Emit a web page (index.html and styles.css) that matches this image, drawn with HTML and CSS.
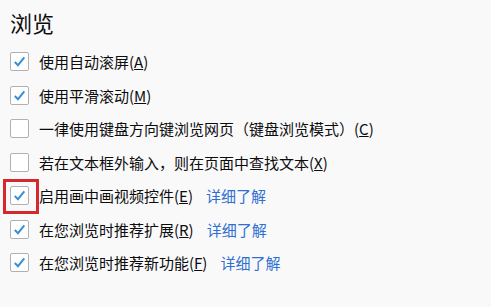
FILE: index.html
```html
<!DOCTYPE html>
<html lang="zh-CN">
<head>
<meta charset="UTF-8">
<title>浏览</title>
<link rel="stylesheet" href="styles.css">
</head>
<body>

<h1 class="title">浏览</h1>

<div class="option">
    <span class="box checked"><svg viewBox="0 0 19 19"><path d="M4.8 10 L8 13.2 L14.3 5.4"/></svg></span>
    <span class="label">使用自动滚屏(<span class="ak">A</span>)</span>
</div>
<div class="option">
    <span class="box checked"><svg viewBox="0 0 19 19"><path d="M4.8 10 L8 13.2 L14.3 5.4"/></svg></span>
    <span class="label">使用平滑滚动(<span class="ak">M</span>)</span>
</div>
<div class="option">
    <span class="box"></span>
    <span class="label">一律使用键盘方向键浏览网页（键盘浏览模式）(<span class="ak">C</span>)</span>
</div>
<div class="option">
    <span class="box"></span>
    <span class="label">若在文本框外输入，则在页面中查找文本(<span class="ak">X</span>)</span>
</div>
<div class="option">
    <span class="box checked highlight"><svg viewBox="0 0 19 19"><path d="M4.8 10 L8 13.2 L14.3 5.4"/></svg></span>
    <span class="label">启用画中画视频控件(<span class="ak">E</span>)</span>
    <a class="more" href="#">详细了解</a>
</div>
<div class="option">
    <span class="box checked"><svg viewBox="0 0 19 19"><path d="M4.8 10 L8 13.2 L14.3 5.4"/></svg></span>
    <span class="label">在您浏览时推荐扩展(<span class="ak">R</span>)</span>
    <a class="more" href="#">详细了解</a>
</div>
<div class="option">
    <span class="box checked"><svg viewBox="0 0 19 19"><path d="M4.8 10 L8 13.2 L14.3 5.4"/></svg></span>
    <span class="label">在您浏览时推荐新功能(<span class="ak">F</span>)</span>
    <a class="more" href="#">详细了解</a>
</div>

</body>
</html>
```

FILE: styles.css
```css
body, html {
    margin: 0;
    background-color: #f9f9fa;
    color: #0c0c0d;
    font-family: "Noto Sans CJK SC", "Noto Sans", sans-serif;
}
body {
    padding: 0 10px;
}
.title {
    font-size: 22px;
    font-weight: normal;
    line-height: 32px;
    margin: 6px 0 7px 0;
}
.option {
    display: flex;
    align-items: center;
    height: 33.5px;
    font-size: 15px;
}
.box {
    position: relative;
    width: 19px;
    height: 19px;
    box-sizing: border-box;
    border: 1px solid #b1b1b3;
    border-radius: 2px;
    background: #fff;
    margin-right: 10px;
    flex-shrink: 0;
}
.box svg {
    position: absolute;
    left: -1px;
    top: -1px;
    width: 19px;
    height: 19px;
}
.box path {
    fill: none;
    stroke: #3a8ed6;
    stroke-width: 2;
}
.highlight::after {
    content: "";
    position: absolute;
    left: -8px;
    top: -8px;
    width: 30px;
    height: 29px;
    border: 3px solid #d42a2e;
}
.ak {
    text-decoration: underline;
}
.more {
    margin-left: 13px;
    color: #2f6fd0;
    text-decoration: none;
}
```
